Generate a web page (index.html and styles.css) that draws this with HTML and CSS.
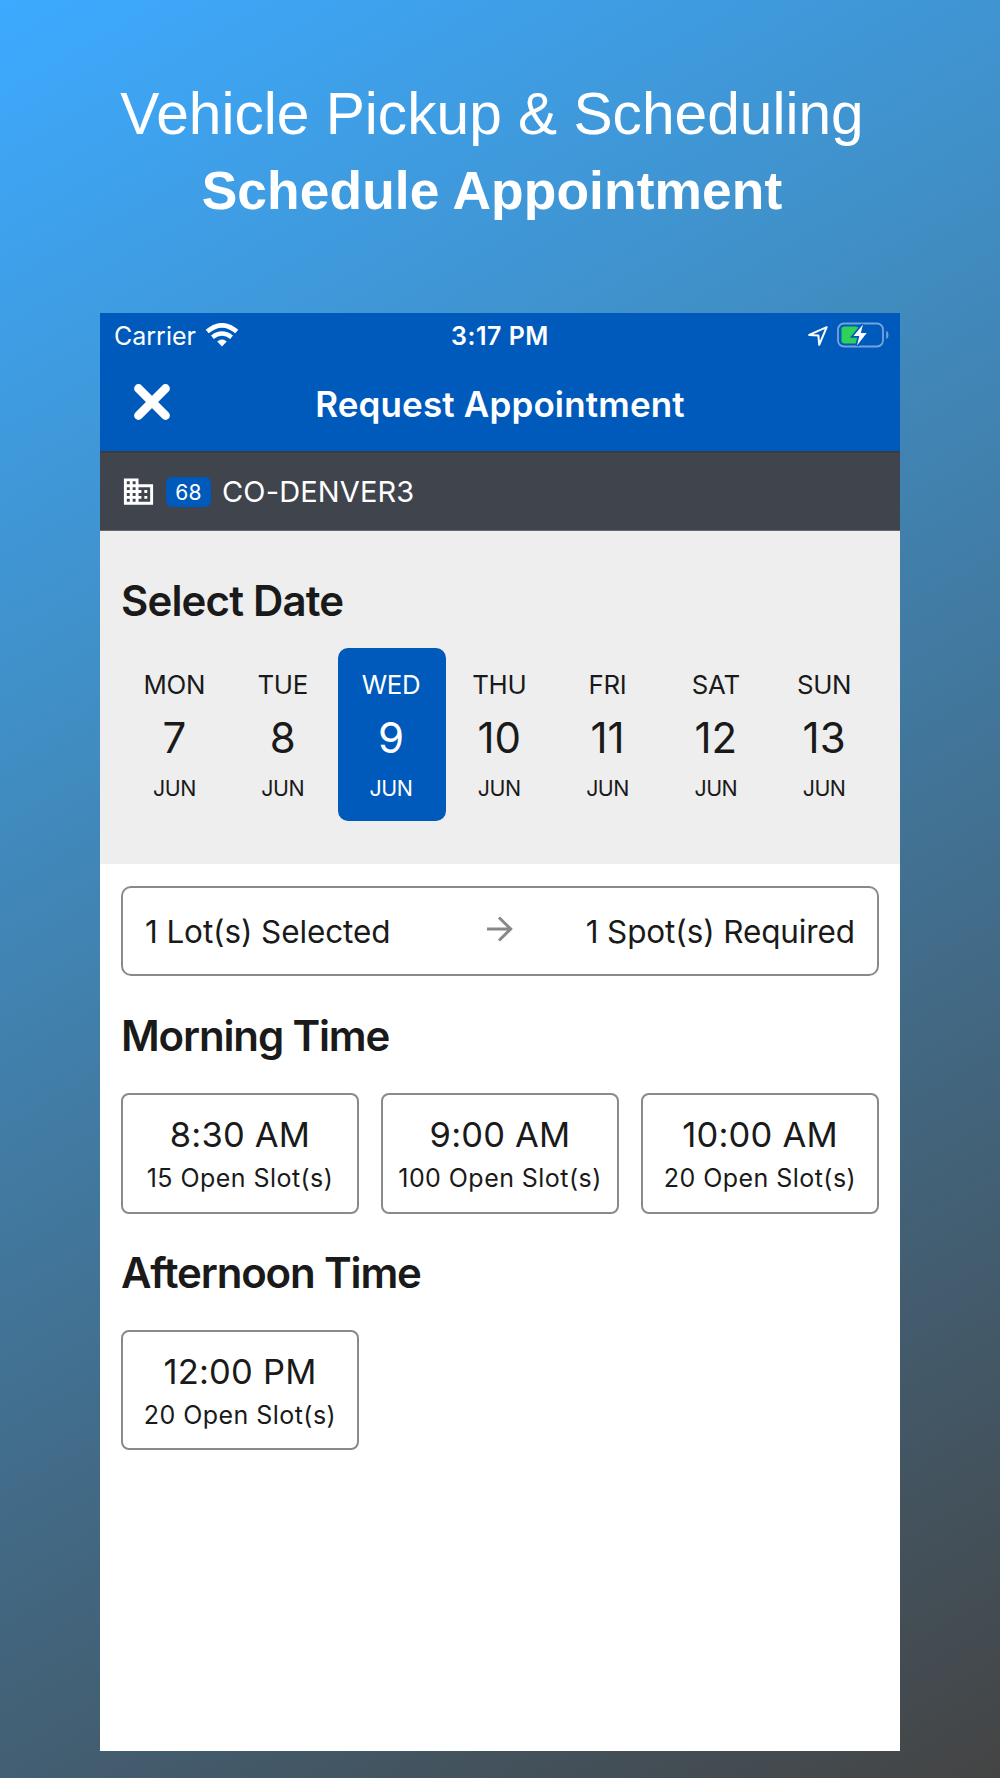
FILE: index.html
```html
<!DOCTYPE html>
<html lang="en">
<head>
  <meta charset="UTF-8" />
  <title>Request Appointment</title>
  <meta name="viewport" content="width=device-width, initial-scale=1.0" />
  <link rel="stylesheet" href="styles.css">
</head>
<body>

  <header class="promo">
    <h1>Vehicle Pickup &amp; Scheduling</h1>
    <h2>Schedule Appointment</h2>
  </header>

  <main class="phone">
    <div class="status-bar">
      <div class="status-left">
        <span class="carrier">Carrier</span>
        <svg class="wifi" viewBox="0 0 34 24">
          <path d="M2.200 8.600Q17-4 31.800 8.600" fill="none" stroke="#fff" stroke-width="4.600" />
          <path d="M7.400 14.200Q17 6.800 26.600 14.200" fill="none" stroke="#fff" stroke-width="4.400" />
          <path d="M12.600 18.600Q17 14.900 21.400 18.600L17 23.200z" fill="#fff" stroke="#fff" stroke-width=".6" stroke-linejoin="round" />
        </svg>
      </div>
      <span class="clock">3:17 PM</span>
      <div class="status-right">
        <svg class="location" viewBox="0 0 20 20">
          <path d="M1.200 8.900 18.700 1.200 11.200 18.800 10.400 9.600z" />
        </svg>
        <svg class="battery" viewBox="0 0 52 26">
          <rect x="1" y="1.500" width="45" height="23" rx="6" fill="none" stroke="#fff" stroke-opacity=".45" stroke-width="1.800" />
          <path d="M49.200 9v8c1.900-.6 2.200-2.200 2.200-4s-.3-3.400-2.200-4z" fill="#fff" fill-opacity=".45" />
          <rect x="4.500" y="4.500" width="17" height="17" rx="3" fill="#30d158" />
          <path d="M26 2.500 16.500 14h5.800L20 23.500 29.700 11h-5.900z" fill="#fff" stroke="#005abb" stroke-width="3.400" paint-order="stroke" />
        </svg>
      </div>
    </div>

    <nav class="nav-bar">
      <svg class="close" viewBox="0 0 36 36">
        <path d="M4.500 4.500l27 27M31.500 4.500l-27 27" />
      </svg>
      <span class="nav-title">Request Appointment</span>
    </nav>

    <div class="yard-bar">
      <svg class="building" viewBox="0 0 24 24">
        <path d="M12 7V3H2v18h20V7H12zM6 19H4v-2h2v2zm0-4H4v-2h2v2zm0-4H4V9h2v2zm0-4H4V5h2v2zm4 12H8v-2h2v2zm0-4H8v-2h2v2zm0-4H8V9h2v2zm0-4H8V5h2v2zm10 12h-8v-2h2v-2h-2v-2h2v-2h-2V9h8v10zm-2-8h-2v2h2v-2zm0 4h-2v2h2v-2z" />
      </svg>
      <span class="badge">68</span>
      <span class="yard-name">CO-DENVER3</span>
    </div>

    <section class="date-section">
      <h3>Select Date</h3>
      <div class="days">
        <button class="day"><span class="dow">MON</span><span class="num">7</span><span class="month">JUN</span></button>
        <button class="day"><span class="dow">TUE</span><span class="num">8</span><span class="month">JUN</span></button>
        <button class="day selected"><span class="dow">WED</span><span class="num">9</span><span class="month">JUN</span></button>
        <button class="day"><span class="dow">THU</span><span class="num">10</span><span class="month">JUN</span></button>
        <button class="day"><span class="dow">FRI</span><span class="num">11</span><span class="month">JUN</span></button>
        <button class="day"><span class="dow">SAT</span><span class="num">12</span><span class="month">JUN</span></button>
        <button class="day"><span class="dow">SUN</span><span class="num">13</span><span class="month">JUN</span></button>
      </div>
    </section>

    <section class="time-section">
      <div class="summary">
        <span>1 Lot(s) Selected</span>
        <svg class="arrow" viewBox="0 0 26 26">
          <path d="M0 13h23.500M12 1.500 23.700 13 12 24.500" />
        </svg>
        <span class="spots">1 Spot(s) Required</span>
      </div>

      <h3>Morning Time</h3>
      <div class="slots">
        <button class="slot"><span class="time">8:30 AM</span><span class="open">15 Open Slot(s)</span></button>
        <button class="slot"><span class="time">9:00 AM</span><span class="open">100 Open Slot(s)</span></button>
        <button class="slot"><span class="time">10:00 AM</span><span class="open">20 Open Slot(s)</span></button>
      </div>

      <h3>Afternoon Time</h3>
      <div class="slots">
        <button class="slot"><span class="time">12:00 PM</span><span class="open">20 Open Slot(s)</span></button>
      </div>
    </section>
  </main>

</body>
</html>
```
FILE: styles.css
```css
* {
  box-sizing: border-box;
  margin: 0;
  padding: 0;
}

body {
  width: 1000px;
  height: 1778px;
  overflow: hidden;
  padding-top: 78px;
  font-family: Inter, "Liberation Sans", sans-serif;
  background: linear-gradient(150deg, #3daaff 0%, #4090c8 30%, #444 100%);
  color: #1a1a1a;
}

.promo {
  padding-right: 16px;
  text-align: center;
  color: #fff;
  font-family: "Liberation Sans", Arial, sans-serif;
}

.promo h1 {
  font-size: 58.67px;
  line-height: 72px;
  font-weight: 400;
}

.promo h2 {
  font-size: 53.33px;
  line-height: 82px;
  font-weight: 700;
  letter-spacing: 0.1px;
}

.phone {
  width: 800px;
  height: 1438px;
  margin: 81px auto 0;
  background: #fff;
}

/* status bar */
.status-bar {
  display: grid;
  grid-template-columns: 1fr auto 1fr;
  align-items: center;
  height: 45px;
  padding: 0 11px;
  background: #005abb;
  color: #fff;
  font-size: 25px;
}

.status-left,
.status-right {
  display: flex;
  align-items: center;
}

.status-left {
  gap: 9px;
  padding-left: 3px;
}

.status-right {
  justify-content: flex-end;
  gap: 9px;
}

.clock {
  font-weight: 600;
  letter-spacing: 0.5px;
}

.wifi {
  width: 34px;
  height: 24px;
  margin-top: -2px;
}

.location {
  width: 20px;
  height: 20px;
  fill: none;
  stroke: #fff;
  stroke-width: 2;
  stroke-linejoin: round;
}

.battery {
  width: 52px;
  height: 26px;
  margin-top: -2px;
}

/* title bar */
.nav-bar {
  display: grid;
  grid-template-columns: 36px 1fr 36px;
  align-items: center;
  height: 93px;
  padding: 0 34px 2px;
  background: #005abb;
  color: #fff;
}

.nav-title {
  text-align: center;
  font-size: 35px;
  font-weight: 600;
  letter-spacing: 0.15px;
}

.close {
  width: 36px;
  height: 36px;
  margin-top: -3px;
  stroke: #fff;
  stroke-width: 8.8;
  stroke-linecap: round;
}

.yard-bar {
  display: flex;
  align-items: center;
  height: 80px;
  padding-left: 21px;
  background: #40444d;
  border-top: 2px solid #363b45;
  border-bottom: 1px solid #66686e;
  color: #fff;
}

.building {
  width: 35px;
  height: 35px;
  fill: #fff;
}

.badge {
  width: 45px;
  height: 30px;
  margin: 0 11px 0 10px;
  border-radius: 6px;
  background: #005abb;
  font-size: 21px;
  line-height: 31px;
  letter-spacing: 0.3px;
  text-align: center;
}

.yard-name {
  font-size: 29px;
  letter-spacing: 0.15px;
}

h3 {
  font-size: 42px;
  line-height: 50px;
  font-weight: 600;
  letter-spacing: -0.85px;
}

/* date picker */
.date-section {
  height: 333px;
  padding: 45px 21px 0;
  background: #eee;
}

.days {
  display: grid;
  grid-template-columns: repeat(7, 1fr);
  margin-top: 21.5px;
}

button {
  border: none;
  background: none;
  font-family: inherit;
  color: inherit;
  display: flex;
  flex-direction: column;
  align-items: center;
}

.day {
  height: 173.5px;
  padding: 21px 1.5px 0 0;
  border-radius: 10px;
}

.day.selected {
  background: #005abb;
  color: #fff;
}

.dow {
  font-size: 25.8px;
  line-height: 32px;
  letter-spacing: -0.3px;
}

.num {
  margin: 12px 0 11px;
  font-size: 42px;
  line-height: 50px;
}

.month {
  font-size: 21.4px;
  line-height: 28px;
  letter-spacing: -0.5px;
}

/* time slots */
.time-section {
  padding: 21.5px 21px 0;
}

.summary {
  display: grid;
  grid-template-columns: 1fr auto 1fr;
  align-items: center;
  height: 90.5px;
  padding: 1px 22px 0;
  border: 2px solid #8a8a8a;
  border-radius: 10px;
  font-size: 31.5px;
  letter-spacing: -0.12px;
}

.spots {
  text-align: right;
}

.arrow {
  width: 26px;
  height: 26px;
  margin-top: -5px;
  fill: none;
  stroke: #888;
  stroke-width: 3;
}

.time-section h3 {
  margin: 35px 0 32px;
  letter-spacing: -1.15px;
}

.time-section .slots + h3 {
  margin-top: 34px;
}

.slots {
  display: grid;
  grid-template-columns: repeat(3, 1fr);
  gap: 22px;
}

.slot {
  height: 120.5px;
  padding-top: 20px;
  border: 2px solid #8a8a8a;
  border-radius: 8px;
}

.time {
  font-size: 34.5px;
  line-height: 40px;
  letter-spacing: 0.2px;
}

.open {
  margin-top: 8px;
  font-size: 25px;
  line-height: 30px;
  letter-spacing: 0.45px;
}
```
